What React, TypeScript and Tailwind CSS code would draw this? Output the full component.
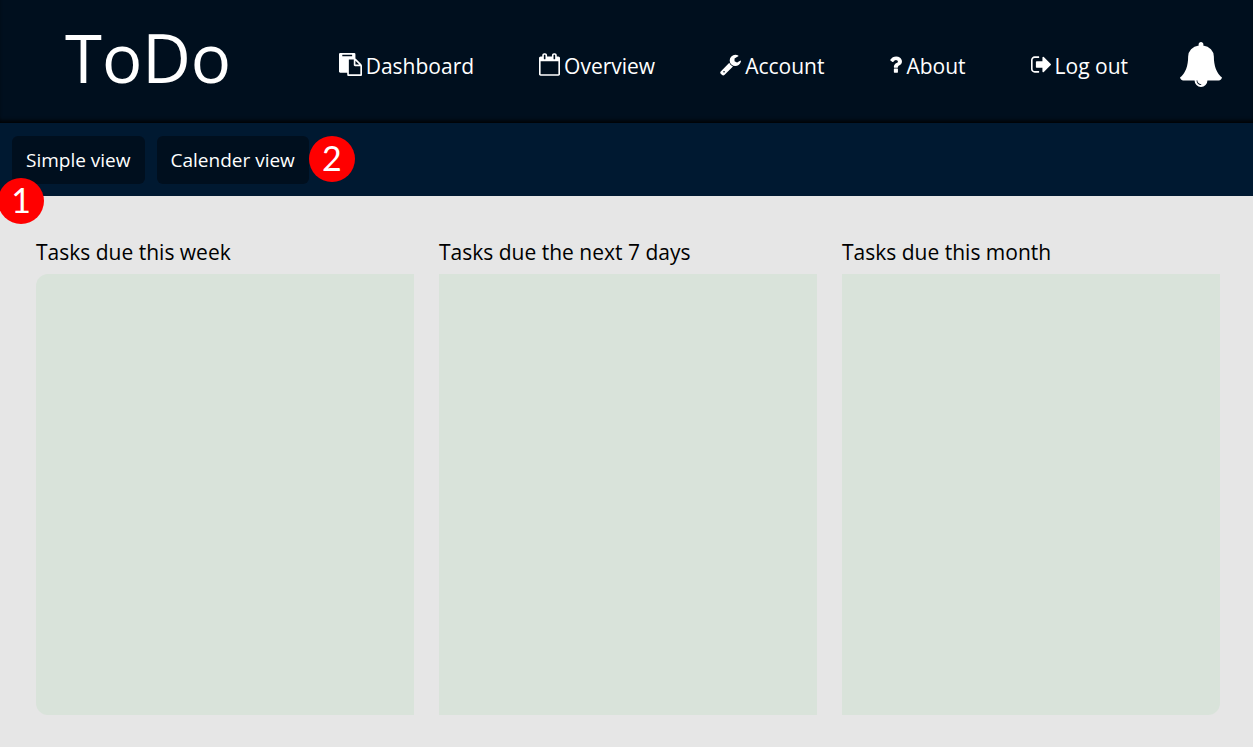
import type { ReactNode } from "react";

type IconProps = { viewBox: string; className: string; d: string };

function Icon({ viewBox, className, d }: IconProps) {
  return (
    <svg viewBox={viewBox} className={className} fill="currentColor" aria-hidden="true">
      <path d={d} />
    </svg>
  );
}

const PASTE =
  "M768 1664h896v-640h-416q-40 0-68-28t-28-68v-416h-384v1152zm256-1440v-64q0-13-9.5-22.5t-22.5-9.5h-704q-13 0-22.5 9.5t-9.5 22.5v64q0 13 9.5 22.5t22.5 9.5h704q13 0 22.5-9.5t9.5-22.5zm256 672h299l-299-299v299zm512 128v672q0 40-28 68t-68 28h-960q-40 0-68-28t-28-68v-160h-544q-40 0-68-28t-28-68v-1344q0-40 28-68t68-28h1088q40 0 68 28t28 68v328q21 13 36 28l408 408q28 28 48 76t20 88z";
const CALENDAR =
  "M192 1664h1408v-1024h-1408v1024zm384-1216v-288q0-14-9-23t-23-9h-64q-14 0-23 9t-9 23v288q0 14 9 23t23 9h64q14 0 23-9t9-23zm768 0v-288q0-14-9-23t-23-9h-64q-14 0-23 9t-9 23v288q0 14 9 23t23 9h64q14 0 23-9t9-23zm384-64v1280q0 52-38 90t-90 38h-1408q-52 0-90-38t-38-90v-1280q0-52 38-90t90-38h128v-96q0-66 47-113t113-47h64q66 0 113 47t47 113v96h384v-96q0-66 47-113t113-47h64q66 0 113 47t47 113v96h128q52 0 90 38t38 90z";
const WRENCH =
  "M448 1472q0-26-19-45t-45-19-45 19-19 45 19 45 45 19 45-19 19-45zm644-420l-682 682q-37 37-90 37-52 0-91-37l-106-108q-38-36-38-90 0-53 38-91l681-681q39 98 114.5 173.5t173.5 114.5zm634-435q0 39-23 106-47 134-164.5 217.5t-258.5 83.5q-185 0-316.5-131.5t-131.5-316.5 131.5-316.5 316.5-131.5q58 0 121.5 16.5t107.5 46.5q16 11 16 28t-16 28l-293 169v224l193 107q5-3 79-48.5t135.5-81 70.5-35.5q15 0 23.5 10t8.5 25z";
const QUESTION =
  "M1088 1256v240q0 16-12 28t-28 12h-240q-16 0-28-12t-12-28v-240q0-16 12-28t28-12h240q16 0 28 12t12 28zm316-600q0 54-15.5 101t-35 76.5-55 59.5-57.5 43.5-61 35.5q-41 23-68.5 65t-27.5 67q0 17-12 32.5t-28 15.5h-240q-15 0-25.5-18.5t-10.5-37.5v-45q0-83 65-156.5t143-108.5q59-27 84-56t25-76q0-42-46.5-74t-107.5-32q-65 0-108 29-35 25-107 115-13 16-31 16-12 0-25-8l-164-125q-13-10-15.5-25t5.5-28q160-266 464-266 80 0 161 31t146 83 106 127.5 41 158.5z";
const SIGN_OUT =
  "M704 1440q0 4 1 20t.5 26.5-3 23.5-10 19.5-20.5 6.5h-320q-119 0-203.5-84.5t-84.5-203.5v-704q0-119 84.5-203.5t203.5-84.5h320q13 0 22.5 9.5t9.5 22.5q0 4 1 20t.5 26.5-3 23.5-10 19.5-20.5 6.5h-320q-66 0-113 47t-47 113v704q0 66 47 113t113 47h312l11.5 1 11.5 3 8 5.5 7 9 2 13.5zm928-544q0 26-19 45l-544 544q-19 19-45 19t-45-19-19-45v-288h-448q-26 0-45-19t-19-45v-384q0-26 19-45t45-19h448v-288q0-26 19-45t45-19 45 19l544 544q19 19 19 45z";
const BELL =
  "M912 1696q0-16-16-16-59 0-101.5-42.5t-42.5-101.5q0-16-16-16t-16 16q0 73 51.5 124.5t124.5 51.5q16 0 16-16zm816-288q0 52-38 90t-90 38h-448q0 106-75 181t-181 75-181-75-75-181h-448q-52 0-90-38t-38-90q50-42 91-88t85-119.5 74.5-158.5 50-206 19.5-260q0-152 117-282.5t307-158.5q-8-19-8-39 0-40 28-68t68-28 68 28 28 68q0 20-8 39 190 28 307 158.5t117 282.5q0 139 19.5 260t50 206 74.5 158.5 85 119.5 91 88z";

const NAV: { label: string; icon: IconProps }[] = [
  { label: "Dashboard", icon: { viewBox: "0 0 1792 1792", className: "mb-1 h-[23px] w-[23px]", d: PASTE } },
  { label: "Overview", icon: { viewBox: "64 0 1664 1792", className: "mb-1 h-[23px] w-[21px]", d: CALENDAR } },
  { label: "Account", icon: { viewBox: "64 0 1664 1792", className: "mb-1 h-[23px] w-[21px]", d: WRENCH } },
  { label: "About", icon: { viewBox: "384 0 1024 1792", className: "mb-1 h-[23px] w-[13px]", d: QUESTION } },
  { label: "Log out", icon: { viewBox: "64 0 1568 1792", className: "mb-1 h-[23px] w-[20px]", d: SIGN_OUT } },
];

const COLUMNS = [
  { title: "Tasks due this week", corners: "rounded-l-xl" },
  { title: "Tasks due the next 7 days", corners: "" },
  { title: "Tasks due this month", corners: "rounded-br-xl" },
];

function Badge({ className, children }: { className: string; children: ReactNode }) {
  return (
    <span
      className={`absolute flex size-[46px] items-center justify-center rounded-full bg-[#ff0000] pb-0.5 font-['Lato',sans-serif] text-[34px] leading-none text-white ${className}`}
    >
      {children}
    </span>
  );
}

function ViewButton({ children }: { children: ReactNode }) {
  return (
    <button type="button" className="h-12 rounded-md bg-[#000f1e] px-[14px] pt-0.5 text-[19px] text-white">
      {children}
    </button>
  );
}

export default function App() {
  return (
    <div className="flex min-h-screen flex-col bg-[#e6e6e6] font-['Open_Sans','Noto_Sans',sans-serif] text-black">
      <header className="flex h-[123px] items-center bg-[#000f1e] pr-[31px] pl-[65px] text-white shadow-[inset_0_-4px_4px_-2px_#000000]">
        <h1 className="pb-2 text-[67px] leading-none">ToDo</h1>
        <nav className="ml-auto flex items-center gap-[65px] pt-2.5">
          {NAV.map(({ label, icon }) => (
            <a key={label} href="#" className="flex items-center gap-1 text-[21px] whitespace-nowrap">
              <Icon {...icon} />
              {label}
            </a>
          ))}
        </nav>
        <button type="button" aria-label="Notifications" className="ml-[52px] pt-1.5">
          <Icon viewBox="64 0 1664 1792" className="h-[45px] w-[42px]" d={BELL} />
        </button>
      </header>

      <div className="flex h-[73px] items-center gap-3 bg-[#001931] px-3">
        <div className="relative">
          <ViewButton>Simple view</ViewButton>
          <Badge className="top-[42px] -left-[14px]">1</Badge>
        </div>
        <div className="relative">
          <ViewButton>Calender view</ViewButton>
          <Badge className="top-0 left-full">2</Badge>
        </div>
      </div>

      <main className="grid flex-1 grid-cols-3 gap-[25px] pt-10 pr-[33px] pb-8 pl-9">
        {COLUMNS.map(({ title, corners }) => (
          <section key={title} className="flex flex-col gap-1.5">
            <h2 className="text-[21px] leading-8">{title}</h2>
            <div className={`flex-1 bg-[#d9e3da] ${corners}`} />
          </section>
        ))}
      </main>
    </div>
  );
}
